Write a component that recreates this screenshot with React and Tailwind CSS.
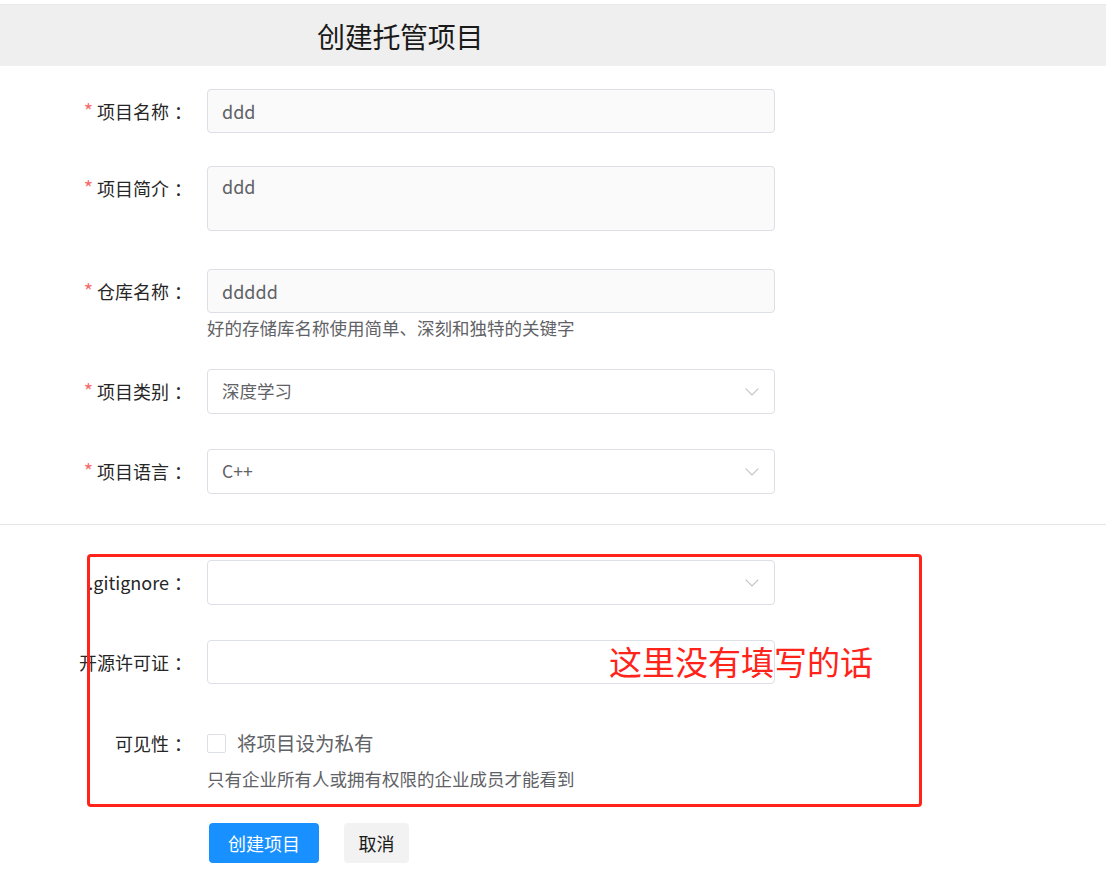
import React from "react";

const FONT = "font-['Noto_Sans_CJK_SC','Noto_Sans',sans-serif]";

function Chevron() {
  return (
    <svg width="14" height="8" viewBox="0 0 14 8" fill="none" className="shrink-0">
      <path d="M0.7 0.7 L7 7 L13.3 0.7" stroke="#c0c4cc" strokeWidth="1.2" />
    </svg>
  );
}

function Label({ required, children }) {
  return (
    <div className="w-[207px] shrink-0 h-[44px] leading-[44px] text-right pr-[15px] text-[18px] text-[#262626] whitespace-nowrap">
      {required && <span className="text-[#f56c6c] mr-[4px] text-[20px]">*</span>}
      {children}
      <span className="ml-[5px]">：</span>
    </div>
  );
}

function Row({ className = "", label, required, children }) {
  return (
    <div className={"flex items-start " + className}>
      <Label required={required}>{label}</Label>
      <div className="w-[568px]">{children}</div>
    </div>
  );
}

function TextInput({ value, filled }) {
  return (
    <div
      className={
        "h-[44px] rounded-[4px] border border-[#dcdfe6] px-[14px] flex items-center text-[18px] text-[#5f6266] " +
        (filled ? "bg-[#fafafa]" : "bg-white")
      }
    >
      {value}
    </div>
  );
}

function Select({ value }) {
  return (
    <div className="h-[45px] rounded-[4px] border border-[#dcdfe6] bg-white pl-[14px] pr-[15px] flex items-center justify-between text-[17.5px] text-[#5f6266]">
      <span>{value}</span>
      <Chevron />
    </div>
  );
}

export default function App() {
  return (
    <div className={"relative w-[1106px] h-[875px] bg-white overflow-hidden " + FONT}>
      <div className="h-[5px] bg-white border-b border-[#e8e8e8]" />
      <div className="h-[61px] bg-[#efefef] flex items-center pl-[317px]">
        <span className="text-[28px] text-[#1a1a1a] tracking-[-0.3px]">创建托管项目</span>
      </div>

      <Row className="mt-[23px]" label="项目名称" required>
        <TextInput value="ddd" filled />
      </Row>

      <Row className="mt-[33px]" label="项目简介" required>
        <div className="h-[65px] rounded-[4px] border border-[#dcdfe6] bg-[#fafafa] px-[14px] pt-[7px] leading-[24px] text-[18px] text-[#5f6266]">
          ddd
        </div>
      </Row>

      <Row className="mt-[38px]" label="仓库名称" required>
        <TextInput value="ddddd" filled />
        <div className="mt-[4px] leading-[22px] text-[17.5px] text-[#5f6266]">
          好的存储库名称使用简单、深刻和独特的关键字
        </div>
      </Row>

      <Row className="mt-[30px]" label="项目类别" required>
        <Select value="深度学习" />
      </Row>

      <Row className="mt-[35px]" label="项目语言" required>
        <Select value="C++" />
      </Row>

      <div className="mt-[30px] h-px bg-[#e6e6e6]" />

      <Row className="mt-[35px]" label=".gitignore">
        <Select value="" />
      </Row>

      <Row className="mt-[35px]" label="开源许可证">
        <TextInput value="" />
      </Row>

      <Row className="mt-[37px]" label="可见性">
        <div className="h-[44px] flex items-center">
          <div className="w-[19px] h-[19px] rounded-[2px] border border-[#dcdfe6] bg-white" />
          <span className="ml-[11px] text-[19.5px] text-[#5f6266]">将项目设为私有</span>
        </div>
        <div className="mt-[3px] leading-[22px] text-[17.5px] text-[#5f6266]">
          只有企业所有人或拥有权限的企业成员才能看到
        </div>
      </Row>

      <div className="mt-[33px] flex pl-[209px] gap-[25px]">
        <button className="w-[110px] h-[40px] rounded-[4px] bg-[#1890ff] text-white text-[18px]">
          创建项目
        </button>
        <button className="w-[65px] h-[40px] rounded-[4px] bg-[#f2f2f2] text-[#1a1a1a] text-[18px]">
          取消
        </button>
      </div>

      {/* annotation overlay */}
      <div className="absolute left-[87px] top-[554px] w-[835px] h-[253px] border-[3px] border-[#ff2319] rounded-[4px] pointer-events-none" />
      <div className="absolute left-[609px] top-[640px] leading-[42px] text-[33px] text-[#ff2319] whitespace-nowrap">
        这里没有填写的话
      </div>
    </div>
  );
}
